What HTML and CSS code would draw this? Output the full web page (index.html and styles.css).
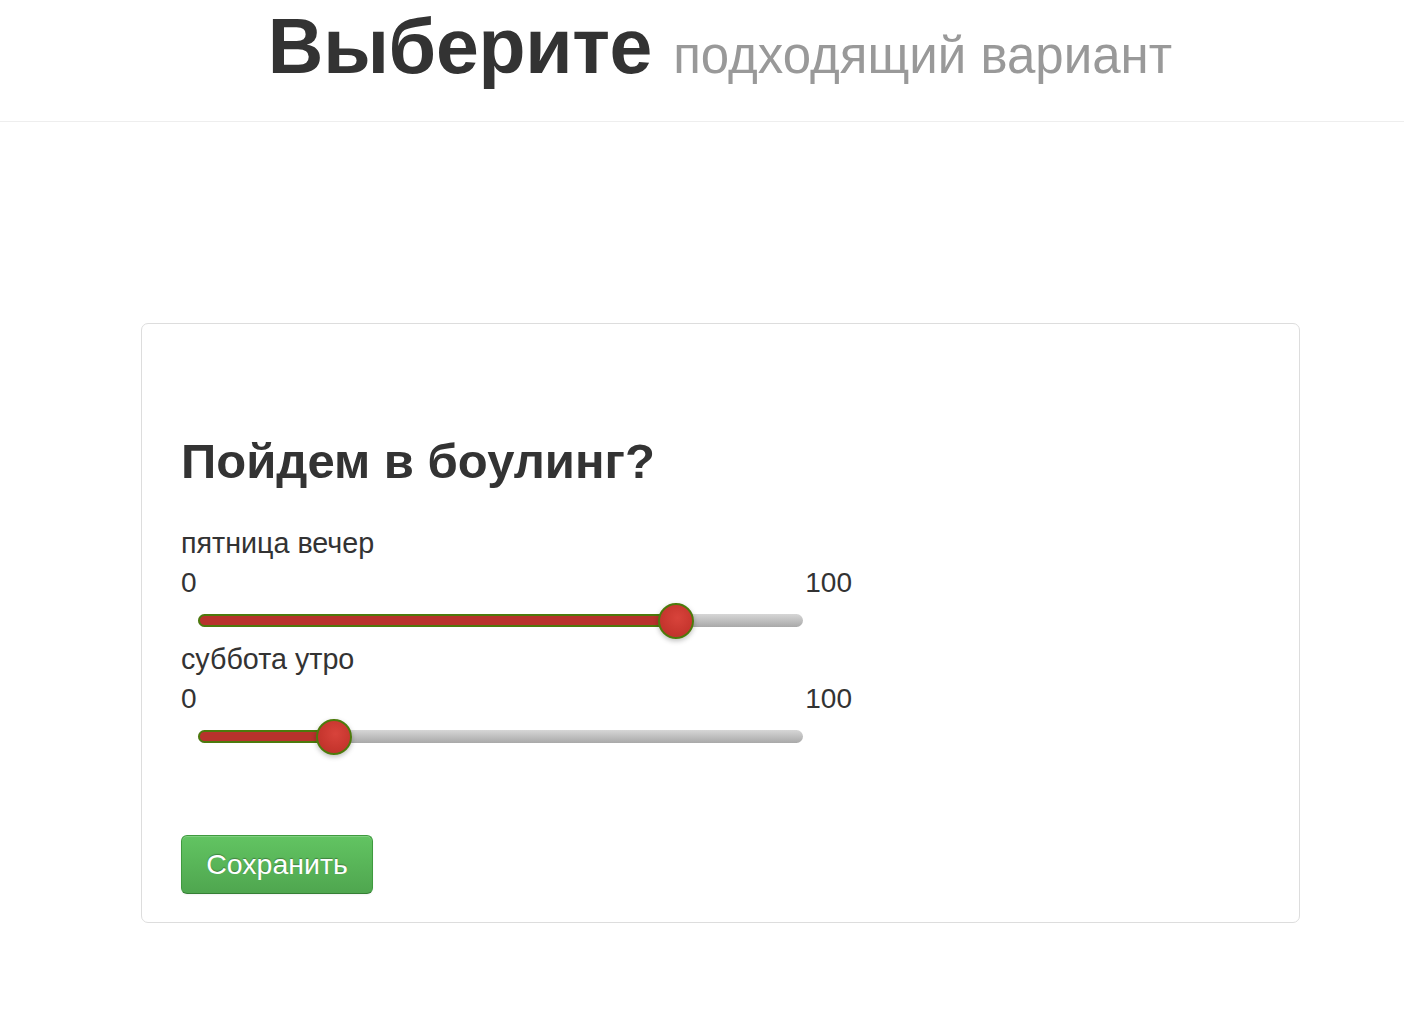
FILE: index.html
```html
<!DOCTYPE html>
<html lang="ru">
<head>
<meta charset="utf-8">
<title>Выберите подходящий вариант</title>
<link rel="stylesheet" href="styles.css">
</head>
<body>
<header class="page-header">
  <h1 class="title">Выберите <small class="subtitle">подходящий вариант</small></h1>
</header>
<main class="main">
  <section class="card">
    <h2 class="question">Пойдем в боулинг?</h2>
    <div class="field">
      <div class="field-label">пятница вечер</div>
      <div class="range-labels"><span>0</span><span>100</span></div>
      <div class="slider">
        <div class="track">
          <div class="fill" style="width: 79%"></div>
          <div class="thumb" style="left: 79%"></div>
        </div>
      </div>
    </div>
    <div class="field">
      <div class="field-label">суббота утро</div>
      <div class="range-labels"><span>0</span><span>100</span></div>
      <div class="slider">
        <div class="track">
          <div class="fill" style="width: 22.5%"></div>
          <div class="thumb" style="left: 22.5%"></div>
        </div>
      </div>
    </div>
    <button class="btn-save" type="button">Сохранить</button>
  </section>
</main>
</body>
</html>
```
FILE: styles.css
```css
* { box-sizing: border-box; }
html, body {
  margin: 0;
  padding: 0;
  background: #fff;
  font-family: "Liberation Sans", Arial, Helvetica, sans-serif;
  color: #333;
}
.page-header {
  height: 122px;
  border-bottom: 1px solid #eeeeee;
  text-align: center;
  padding: 6px 0 0 36px;
}
.title {
  margin: 0;
  font-size: 77px;
  line-height: 80px;
  font-weight: bold;
  color: #333;
  letter-spacing: -0.3px;
}
.subtitle {
  font-size: 51px;
  font-weight: normal;
  color: #999;
  letter-spacing: 0;
}
.main {
  padding: 201px 105px 0 141px;
}
.card {
  width: 1159px;
  height: 600px;
  border: 1px solid #dddddd;
  border-radius: 7px;
  padding: 107px 39px 0 39px;
}
.question {
  margin: 0 0 32px 0;
  font-size: 49px;
  line-height: 60px;
  font-weight: bold;
  color: #333;
}
.field-label {
  font-size: 28.7px;
  line-height: 40px;
  color: #333;
}
.range-labels {
  width: 671px;
  display: flex;
  justify-content: space-between;
  font-size: 28px;
  line-height: 40px;
  color: #333;
}
.slider {
  width: 622px;
  padding: 11px 0 12px 17px;
}
.track {
  position: relative;
  height: 13px;
  border-radius: 7px;
  background: linear-gradient(#d6d6d6, #a9a9a9);
}
.fill {
  height: 13px;
  border-radius: 7px;
  background: #b8332c;
  border: 2px solid #4d7a0c;
}
.thumb {
  position: absolute;
  top: 50%;
  width: 36px;
  height: 36px;
  margin: -18px 0 0 -18px;
  border-radius: 50%;
  border: 2px solid #4d7a0c;
  background: radial-gradient(circle at 55% 40%, #d8433b 0%, #c8372f 55%, #b6302a 100%);
  box-shadow: 0 2px 5px rgba(0,0,0,0.25);
}
.btn-save {
  display: block;
  margin-top: 80px;
  width: 192px;
  height: 59px;
  border: 1px solid #3f9a3f;
  border-bottom-color: #357f35;
  border-radius: 6px;
  background: linear-gradient(#62c462, #4fa64f);
  color: #fff;
  font-family: "Liberation Sans", Arial, sans-serif;
  font-size: 28.5px;
  text-shadow: 0 -1px 1px rgba(0,0,0,0.3);
  box-shadow: inset 0 1px 0 rgba(255,255,255,0.2), 0 1px 2px rgba(0,0,0,0.05);
  padding: 0;
}
```
